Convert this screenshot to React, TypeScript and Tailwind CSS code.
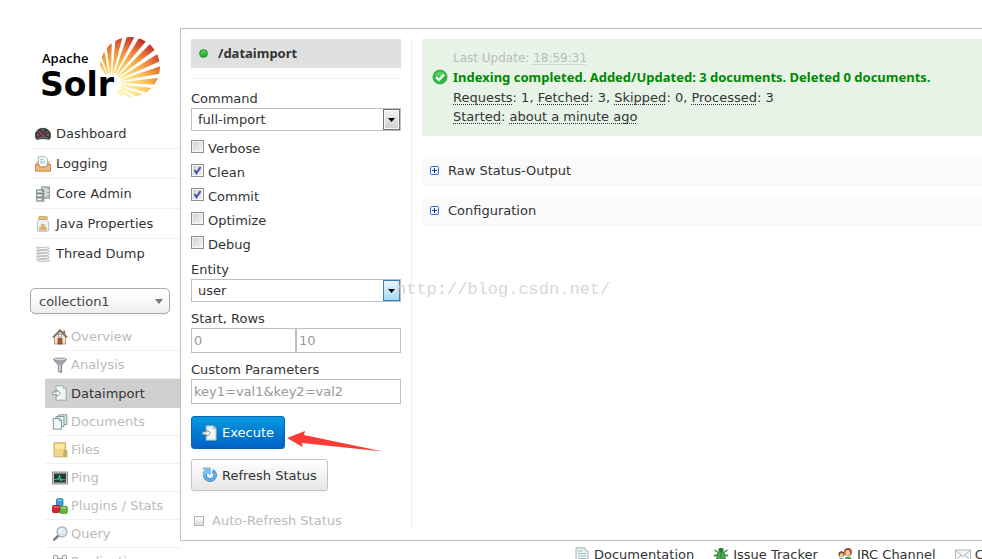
import type { ReactNode } from 'react';

const SANS = "font-['Verdana','DejaVu_Sans',sans-serif]";

function Icon({ children }: { children: ReactNode }) {
  return (
    <svg viewBox="0 0 16 16" className="size-4 shrink-0" aria-hidden="true">
      {children}
    </svg>
  );
}

const DashboardIcon = () => (
  <Icon>
    <path d="M.3 9.500C.3 5 3.800 2.300 8 2.300S15.700 5 15.700 9.500c0 1.500-.4 2.600-1 3.400-.5.6-1.400.6-2.200.3-2.500-.7-6.500-.7-9 0-.8.3-1.700.3-2.200-.3-.6-.8-1-1.900-1-3.400Z" fill="#414145" stroke="#222" strokeWidth=".6" />
    <path d="M2.300 9h1.500M12.200 9h1.500M3.600 5.600l1 .8M12.400 5.600l-1 .8M8 3.400v1.400" stroke="#bdbdbd" strokeWidth=".8" />
    <path d="M4 5.500l5.500 5.500" stroke="#e03030" strokeWidth="1.200" />
    <path d="M2.500 12.600c3.500-1.300 7.500-1.300 11 0" stroke="#8b8b8b" strokeWidth=".7" fill="none" />
  </Icon>
);

const LoggingIcon = () => (
  <Icon>
    <path d="M2.500 5.500h11l2 4.500v5H.5v-5Z" fill="#f4d9b4" stroke="#c98c4a" strokeWidth=".8" />
    <path d="M3.300.8h7.200l2 2V11H3.300Z" fill="#f6fbfb" stroke="#8fb0b0" strokeWidth=".8" />
    <path d="M5 3.500h4M5 5.300h5.500M5 7.100h5.500" stroke="#a4c4c2" strokeWidth=".9" />
    <path d="M.5 8.500h3.500l1 2.500h6l1-2.500h3.500v6.500H.5Z" fill="#eeb878" stroke="#bd7f3d" strokeWidth=".8" />
  </Icon>
);

const CoreIcon = () => (
  <Icon>
    <path d="M6.500.8h8v11.500h-8Z" fill="#c5c9c9" stroke="#858b8b" strokeWidth=".8" />
    <path d="M7.500 3h4M7.500 6.500h4M7.500 10h4M6.800 4.700h7.500M6.800 8.300h7.500" stroke="#eee" strokeWidth=".9" />
    <path d="M1.500 3.800h7.300v11.400H1.500Z" fill="#b9bdbf" stroke="#757b7d" strokeWidth=".8" />
    <path d="M2 7.500h6.500M2 11.300h6.500" stroke="#697073" strokeWidth=".8" />
    <path d="M2.300 5.500h4M2.300 9.400h4M2.300 13.300h4" stroke="#f4f4f4" strokeWidth="1.200" />
    <path d="M7.600 5v1M7.600 9v1M7.600 13v1M13.200 2v1M13.200 6v1M13.200 9.500v1" stroke="#47a847" strokeWidth="1" />
  </Icon>
);

const JarIcon = () => (
  <Icon>
    <path d="M4 3.500h8l1.700 2.500v8.300c0 .6-.4 1-1 1H3.300c-.6 0-1-.4-1-1V6Z" fill="#eaf2f7" stroke="#a3b3bd" strokeWidth=".8" />
    <rect x="3.700" y=".6" width="8.600" height="2.800" rx=".6" fill="#e8c67a" stroke="#b88930" strokeWidth=".6" />
    <path d="M4.700 11.500h3v2.500h-3ZM8.300 11.500h3v2.500h-3ZM6.500 8.500h3v2.500h-3Z" fill="#ecc673" stroke="#c8963a" strokeWidth=".6" />
  </Icon>
);

const ThreadIcon = () => (
  <Icon>
    {[1, 4, 7, 10, 13].map((y) => (
      <path key={y} d={`M1.500 ${y}c3 .8 7 .8 11 0l2 1.500c-3 1.300-8.500 1.300-12 .3Z`} fill="#fafafa" stroke="#adadad" strokeWidth=".8" />
    ))}
  </Icon>
);

const HouseIcon = () => (
  <Icon>
    <path d="M2.500 8v7h11V8L8 2.500Z" fill="#f5e3d0" stroke="#a1866c" strokeWidth=".8" />
    <path d="M11.200 1.500h2v4h-2Z" fill="#b06a50" />
    <path d="M.8 8.500 8 1.300l7.200 7.200" fill="none" stroke="#7b6a5e" strokeWidth="1.700" />
    <rect x="6.500" y="5.300" width="3" height="2.700" fill="#fff" stroke="#79828c" strokeWidth=".7" />
    <path d="M6 15V9.500h4V15Z" fill="#b25c2f" stroke="#723b1e" strokeWidth=".7" />
  </Icon>
);

const FunnelIcon = () => (
  <Icon>
    <path d="M1.500 2.500 6.300 8v6.500l3.400 1V8l4.800-5.500Z" fill="#aaaab2" stroke="#777780" strokeWidth=".8" />
    <ellipse cx="8" cy="2.500" rx="6.500" ry="1.500" fill="#d9d9de" stroke="#777780" strokeWidth=".8" />
    <path d="M7.600 8v6" stroke="#ececf0" strokeWidth="1" />
  </Icon>
);

const ImportIcon = () => (
  <Icon>
    <path d="M4 .8h7.500L14.200 3.500v11.700H4Z" fill="#eef5f4" stroke="#8ea6a4" strokeWidth=".9" />
    <path d="M11.500.8v2.700h2.700" fill="#cfdfdd" stroke="#8ea6a4" strokeWidth=".7" />
    <path d="M.7 7h4V4.900L8.500 8.200 4.700 11.500V9.400h-4Z" fill="#fff" stroke="#7b918f" strokeWidth=".9" />
  </Icon>
);

const DocsIcon = () => (
  <Icon>
    <path d="M6.500.8h8.300v9.700H6.500Z" fill="#dbeae9" stroke="#72908f" strokeWidth=".9" />
    <path d="M4 2.500h8v10H4Z" fill="#e6f1f0" stroke="#72908f" strokeWidth=".9" />
    <path d="M1.300 4.500h6.200l2 2v8.700H1.300Z" fill="#f3f9f8" stroke="#72908f" strokeWidth=".9" />
    <path d="M7.300 4.500v2.200h2.200" fill="none" stroke="#72908f" strokeWidth=".8" />
  </Icon>
);

const FolderIcon = () => (
  <Icon>
    <path d="M2 .8h11.500v13.700H2Z" fill="#f3d688" stroke="#cda54d" strokeWidth=".9" />
    <path d="M3 2h9.500v5H3Z" fill="#fae5aa" />
    <path d="M12 8.500h3v6.500h-3.300Z" fill="#eac36b" stroke="#c39a42" strokeWidth=".7" />
    <path d="M13 9.500v4" stroke="#5a9cc8" strokeWidth="1" />
    <path d="M1 15h11" stroke="#d8cba9" strokeWidth=".8" />
  </Icon>
);

const PingIcon = () => (
  <Icon>
    <rect x=".5" y="2" width="15" height="12" fill="#c8c8c8" stroke="#888" strokeWidth=".9" />
    <rect x="2" y="3.500" width="12" height="9" fill="#29383a" />
    <path d="M2.500 9.500h2l1-1 1 1.500L7.500 5l1.200 6 1-2 1 .8h2.800" fill="none" stroke="#4be0a4" strokeWidth=".9" />
  </Icon>
);

const PluginsIcon = () => (
  <Icon>
    <rect x="4.500" y=".8" width="6.500" height="7" rx="1" fill="#37a0dc" stroke="#1b74ac" strokeWidth=".8" />
    <rect x=".6" y="7.500" width="7" height="7" rx="1" fill="#dc2038" stroke="#a00d20" strokeWidth=".8" />
    <rect x="8" y="8.300" width="7.300" height="7" rx="1" fill="#62b832" stroke="#3e8a1a" strokeWidth=".8" />
    <path d="M5.500 2.300h4.500M1.600 9h5M9 9.800h5.300" stroke="#fff" strokeOpacity=".5" strokeWidth="1.200" />
  </Icon>
);

const QueryIcon = () => (
  <Icon>
    <path d="M6 10 2.200 13.600" stroke="#7d7d85" strokeWidth="2.600" strokeLinecap="round" />
    <circle cx="10" cy="5.800" r="5" fill="#dcebf8" stroke="#a8acb8" strokeWidth="1.200" />
    <path d="M7 5.500c.4-1.700 2-2.600 3.800-2.400" stroke="#fff" strokeWidth="1.300" fill="none" />
  </Icon>
);

const ReplicationIcon = () => (
  <Icon>
    <circle cx="3.500" cy="3.500" r="2.300" fill="#f0f0f0" stroke="#999" />
    <circle cx="12.500" cy="3.500" r="2.300" fill="#f0f0f0" stroke="#999" />
    <circle cx="8" cy="12" r="2.300" fill="#f0f0f0" stroke="#999" />
    <path d="M5.500 4.500h5M4.500 5.500 7 10M11.500 5.500 9 10" stroke="#999" />
  </Icon>
);

const DocumentIcon = () => (
  <Icon>
    <path d="M2 .8h9l3 3v11.400H2Z" fill="#eaf3f2" stroke="#97aeac" strokeWidth=".9" />
    <path d="M11 .8v3h3" fill="#fff" stroke="#97aeac" strokeWidth=".7" />
    <path d="M4 4h5M4 6.500h8M4 9h8M4 11.500h8" stroke="#a5bfbc" strokeWidth="1" />
  </Icon>
);

const BugIcon = () => (
  <Icon>
    <path d="M4.500 5 1.500 3M11.500 5l3-2M4 8.500H.8M12 8.500h3.200M4.500 11.500l-3 2.500M11.500 11.500l3 2.500" stroke="#2e7d36" strokeWidth="1.400" />
    <rect x="5.200" y="1" width="5.600" height="4" rx="2" fill="#2f7f35" />
    <rect x="4" y="4.500" width="8" height="10.500" rx="3.500" fill="#4ea854" stroke="#25702c" strokeWidth=".8" />
    <path d="M8 5v9.500" stroke="#25702c" strokeWidth=".8" />
  </Icon>
);

const UsersIcon = () => (
  <Icon>
    <path d="M7 15.500c0-4 1.500-6 4-6s4.300 2 4.300 6Z" fill="#45a060" />
    <circle cx="11" cy="5" r="3.900" fill="#a34a2e" />
    <ellipse cx="10.800" cy="6" rx="2.400" ry="2.900" fill="#f4c8a0" />
    <path d="M.6 15.500c0-3 1.400-4.500 3.800-4.500s3.800 1.500 3.800 4.500Z" fill="#4b8fcf" />
    <circle cx="4.500" cy="7.300" r="3" fill="#6f4527" />
    <ellipse cx="4.700" cy="8.200" rx="2" ry="2.300" fill="#f1c094" />
  </Icon>
);

const MailIcon = () => (
  <Icon>
    <rect x=".5" y="3" width="15" height="10.500" fill="#f3f7f8" stroke="#a2b0b4" strokeWidth=".9" />
    <path d="m1 3.500 7 6 7-6M1 13l5-5M15 13l-5-5" fill="none" stroke="#a2b0b4" strokeWidth=".9" />
  </Icon>
);

const RefreshIcon = () => (
  <Icon>
    <path d="M10.500 3.700A5 5 0 1 1 3.300 6.500" fill="none" stroke="#2f80c4" strokeWidth="3.600" />
    <path d="M10.500 3.700A5 5 0 1 1 3.300 6.500" fill="none" stroke="#62b2ea" strokeWidth="2.200" />
    <path d="M.8 1h7.400v6.800L5.900 5.900 3.600 8.200.9 5.900 3 3.300Z" fill="#7cc4f0" stroke="#4a9fd8" strokeWidth=".6" />
  </Icon>
);

const CheckIcon = () => (
  <Icon>
    <circle cx="8" cy="8" r="7" fill="#28b83a" stroke="#39a848" strokeWidth=".9" />
    <path d="M2.500 6.500a5.800 5.800 0 0 1 11 0c-3 1.500-8 1.500-11 0Z" fill="#74d67c" opacity=".6" />
    <path d="m4 8 3 3 5-5.600" fill="none" stroke="#fff" strokeWidth="2.300" />
  </Icon>
);

const PlusIcon = () => (
  <svg viewBox="0 0 9 9" className="size-[9px] shrink-0" aria-hidden="true">
    <rect x=".5" y=".5" width="8" height="8" rx="1" fill="#f2f5ff" stroke="#3f63d2" />
    <path d="M2 4.500h5M4.500 2v5" stroke="#1d3fae" />
  </svg>
);

const rays = Array.from({ length: 14 }, (_, i) => {
  const point = (deg: number) => {
    const a = (deg * Math.PI) / 180;
    return `${(71 + 90 * Math.cos(a)).toFixed(2)} ${(47 + 90 * Math.sin(a)).toFixed(2)}`;
  };
  const mid = -119 + i * 13;
  return `M71 47L${point(mid - 4)}L${point(mid + 4)}Z`;
}).join('');

function Logo() {
  return (
    <a href="#" aria-label="Apache Solr" className="ml-[10px] block w-[122px]">
      <svg viewBox="0 0 122 66" className="h-[66px] w-[122px]">
        <defs>
          <radialGradient id="sun" gradientUnits="userSpaceOnUse" cx="78" cy="58" r="60">
            <stop offset=".2" stopColor="#fff0a0" />
            <stop offset=".5" stopColor="#f9c45c" />
            <stop offset=".75" stopColor="#ea7f37" />
            <stop offset="1" stopColor="#c3272d" />
          </radialGradient>
          <clipPath id="disc">
            <circle cx="90" cy="31" r="30" />
          </clipPath>
        </defs>
        <path d={rays} fill="url(#sun)" clipPath="url(#disc)" />
        <circle cx="71" cy="47" r="10" fill="#fff" />
        <text x="2" y="27" fontSize="13" fontWeight="600" fontFamily="'Open Sans', sans-serif">Apache</text>
        <text x="0" y="60" fontSize="33" fontWeight="700" fontFamily="'DejaVu Sans', sans-serif">Solr</text>
      </svg>
    </a>
  );
}

const mainMenu = [
  { label: 'Dashboard', icon: <DashboardIcon /> },
  { label: 'Logging', icon: <LoggingIcon /> },
  { label: 'Core Admin', icon: <CoreIcon /> },
  { label: 'Java Properties', icon: <JarIcon /> },
  { label: 'Thread Dump', icon: <ThreadIcon /> },
];

const coreMenu = [
  { label: 'Overview', icon: <HouseIcon /> },
  { label: 'Analysis', icon: <FunnelIcon /> },
  { label: 'Dataimport', icon: <ImportIcon />, active: true },
  { label: 'Documents', icon: <DocsIcon /> },
  { label: 'Files', icon: <FolderIcon /> },
  { label: 'Ping', icon: <PingIcon /> },
  { label: 'Plugins / Stats', icon: <PluginsIcon /> },
  { label: 'Query', icon: <QueryIcon /> },
  { label: 'Replication', icon: <ReplicationIcon /> },
];

function Sidebar() {
  return (
    <nav className="w-[180px] shrink-0 pl-[30px] pt-9">
      <Logo />
      <ul className="mt-[17px]">
        {mainMenu.map((item) => (
          <li key={item.label} className="border-b border-[#f0f0f0] last:border-0">
            <a href="#" className="flex h-[29px] items-center gap-[5px] pl-[5px]">
              {item.icon}
              {item.label}
            </a>
          </li>
        ))}
      </ul>
      <div className="relative mr-[10px] mt-5">
        <select aria-label="Core" className="block h-[26px] w-full appearance-none rounded-[5px] border border-[#aaa] bg-linear-to-b from-white from-20% to-[#eee] pl-2 text-[#444] shadow-xs">
          <option>collection1</option>
        </select>
        <svg viewBox="0 0 8 5" className="pointer-events-none absolute right-[7px] top-[11px] h-[5px] w-2" aria-hidden="true">
          <path d="M0 0h8L4 5Z" fill="#777" />
        </svg>
      </div>
      <ul className="ml-[15px] mt-[9px]">
        {coreMenu.map((item) => (
          <li key={item.label} className={item.active ? 'border-b border-[#d0d0d0] bg-[#d0d0d0]' : 'border-b border-[#f0f0f0]'}>
            <a href="#" className={item.active ? 'flex h-7 items-center gap-[3px] pl-[7px]' : 'flex h-[27px] items-center gap-[3px] pl-[7px] text-[#bbb]'}>
              {item.icon}
              {item.label}
            </a>
          </li>
        ))}
      </ul>
    </nav>
  );
}

const labelClass = 'block h-5 pt-px leading-5';

function SelectField({ id, label, value, highlighted }: { id: string; label: string; value: string; highlighted?: boolean }) {
  return (
    <div>
      <label htmlFor={id} className={labelClass}>{label}</label>
      <div className="relative">
        <select id={id} className="block h-[23px] w-full appearance-none border border-[#bfbfbf] bg-white pl-[6px]">
          <option>{value}</option>
        </select>
        <span
          className={
            highlighted
              ? 'pointer-events-none absolute right-px top-px flex h-[21px] w-[17px] items-center justify-center border border-[#3c7fb1] bg-linear-to-b from-[#e8f6fd] to-[#a7d9f5]'
              : 'pointer-events-none absolute right-px top-px flex h-[21px] w-[17px] items-center justify-center border border-[#707070] bg-linear-to-b from-[#f2f2f2] to-[#cfcfcf] shadow-[inset_0_0_0_1px_#fafafa]'
          }
        >
          <svg viewBox="0 0 7 4" className="h-1 w-[7px]" aria-hidden="true">
            <path d="M0 0h7L3.500 4Z" fill="#000" />
          </svg>
        </span>
      </div>
    </div>
  );
}

function CheckField({ label, checked }: { label: string; checked?: boolean }) {
  return (
    <label className="flex h-6 items-center gap-1">
      <span className="relative mb-[3px] size-[13px]">
        <input
          type="checkbox"
          defaultChecked={checked}
          className="peer block size-[13px] appearance-none border border-[#8e8f8f] bg-linear-to-br from-[#cbcfd5] to-[#f6f6f6] shadow-[inset_0_0_0_1px_#f4f4f4]"
        />
        <svg viewBox="0 0 13 13" className="pointer-events-none absolute inset-0 hidden size-[13px] peer-checked:block" aria-hidden="true">
          <path d="m3.500 6 2 3.200L9.500 3" fill="none" stroke="#3f5597" strokeWidth="2" />
        </svg>
      </span>
      {label}
    </label>
  );
}

const inputClass = 'block h-[25px] min-w-0 border border-[#bfbfbf] bg-white px-[2px] placeholder:text-[#999]';

function ImportForm() {
  return (
    <form className="w-[221px] shrink-0 border-r border-[#f0f0f0] pr-[10px]" onSubmit={(e) => e.preventDefault()}>
      <a href="#" className="flex h-[29px] items-center gap-[10px] bg-[#e0e0e0] pl-2 font-['Noto_Sans',sans-serif] font-bold">
        <span className="size-[9px] rounded-full border border-[#1d9a2c] bg-linear-to-b from-[#58d264] to-[#17a826]" />
        /dataimport
      </a>
      <div className="mt-[10px] border-t border-[#f0f0f0] pt-[9px]">
        <SelectField id="command" label="Command" value="full-import" />
      </div>
      <div className="mb-[3px] mt-[5px]">
        <CheckField label="Verbose" />
        <CheckField label="Clean" checked />
        <CheckField label="Commit" checked />
        <CheckField label="Optimize" />
        <CheckField label="Debug" />
      </div>
      <SelectField id="entity" label="Entity" value="user" highlighted />
      <div className="mt-[6px]">
        <label htmlFor="start" className={labelClass}>Start, Rows</label>
        <div className="flex">
          <input id="start" placeholder="0" className={`${inputClass} flex-1`} />
          <input aria-label="Rows" placeholder="10" className={`${inputClass} flex-1`} />
        </div>
      </div>
      <div className="mt-[6px]">
        <label htmlFor="custom" className={labelClass}>Custom Parameters</label>
        <input id="custom" placeholder="key1=val1&key2=val2" className={`${inputClass} w-full`} />
      </div>
      <div className="relative mt-3 flex">
        <button type="submit" className="flex h-[33px] items-center gap-1 rounded-[3px] border border-[#0566b8] bg-linear-to-b from-[#0a9adf] to-[#0360c8] px-[10px] text-white">
          <ImportIcon />
          Execute
        </button>
        <svg viewBox="0 0 96 22" className="pointer-events-none absolute left-24 top-[14px] h-[22px] w-24" aria-hidden="true">
          <path d="M0 8 18 1l-1 4 79 16.500L15 13l.5 4Z" fill="#fb3b36" />
        </svg>
      </div>
      <button type="button" className="mt-[10px] flex h-8 items-center gap-1 rounded-[3px] border border-[#c4c4c4] bg-linear-to-b from-white to-[#e6e6e6] px-[10px] shadow-xs">
        <RefreshIcon />
        Refresh Status
      </button>
      <label className="mt-5 flex h-[19px] items-center gap-2 pl-[3px] text-[#bbb]">
        <input type="checkbox" className="size-[10px] appearance-none border border-[#b4b4b4] bg-linear-to-b from-white to-[#dcdcdc]" />
        Auto-Refresh Status
      </label>
    </form>
  );
}

function Abbr({ children }: { children: ReactNode }) {
  return <abbr className="underline decoration-dotted decoration-1 underline-offset-2 [text-decoration-skip-ink:none]">{children}</abbr>;
}

function StatusPanel() {
  return (
    <section className="min-w-0 flex-1 pl-[10px]">
      <div className="flex h-[97px] items-start gap-[5px] whitespace-nowrap bg-[#e6f3e6] pl-[10px] pt-[10px]">
        <div className="pt-5">
          <CheckIcon />
        </div>
        <div className="leading-[19px]">
          <p className="text-xs leading-[19px] text-[#bbb]">
            Last Update: <Abbr>18:59:31</Abbr>
          </p>
          <p className="font-['Noto_Sans',sans-serif] font-bold text-[#080]">Indexing completed. Added/Updated: 3 documents. Deleted 0 documents.</p>
          <p className="mt-px">
            <Abbr>Requests</Abbr>: 1, <Abbr>Fetched</Abbr>: 3, <Abbr>Skipped</Abbr>: 0, <Abbr>Processed</Abbr>: 3
          </p>
          <p>
            <Abbr>Started</Abbr>: <Abbr>about a minute ago</Abbr>
          </p>
        </div>
      </div>
      <div className="mt-5 flex flex-col gap-[10px]">
        {['Raw Status-Output', 'Configuration'].map((title) => (
          <a key={title} href="#" className="flex h-[30px] items-center gap-[9px] bg-[#fafafa] pb-[2px] pl-2">
            <PlusIcon />
            {title}
          </a>
        ))}
      </div>
    </section>
  );
}

const footerLinks = [
  { label: 'Documentation', icon: <DocumentIcon /> },
  { label: 'Issue Tracker', icon: <BugIcon /> },
  { label: 'IRC Channel', icon: <UsersIcon /> },
  { label: 'Community forum', icon: <MailIcon /> },
];

export default function App() {
  return (
    <div className={`${SANS} relative flex h-screen overflow-hidden bg-white text-[13px] leading-[19px] text-[#333]`}>
      <Sidebar />
      <div className="min-w-0 flex-1 pt-7">
        <main className="flex border-y border-l border-[#c0c0c0] py-[10px] pl-[10px]">
          <ImportForm />
          <StatusPanel />
        </main>
        <footer className="mt-1 flex gap-[19px] overflow-hidden whitespace-nowrap pl-[394px]">
          {footerLinks.map((link) => (
            <a key={link.label} href="#" className="flex items-center gap-1">
              {link.icon}
              {link.label}
            </a>
          ))}
        </footer>
      </div>
      <span className="pointer-events-none absolute left-[396px] top-[278px] font-['Liberation_Mono',monospace] text-[17px] leading-6 text-[#d8d8d2]">
        http://blog.csdn.net/
      </span>
    </div>
  );
}
